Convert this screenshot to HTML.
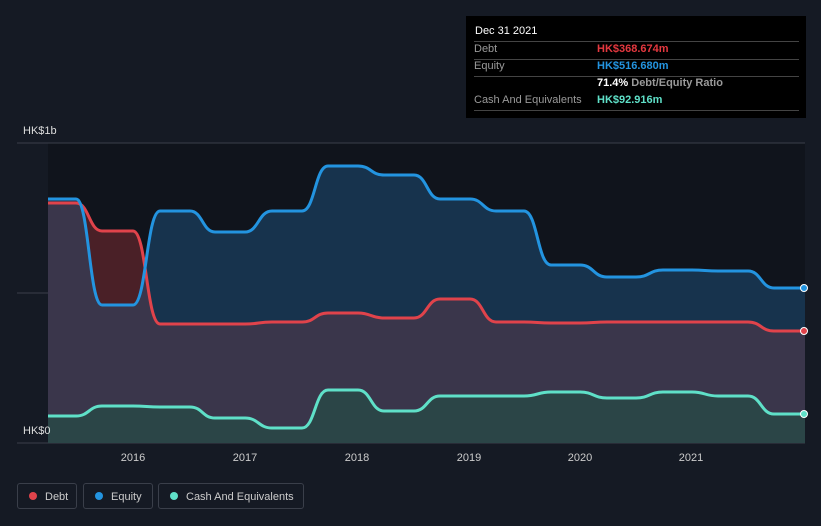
<!DOCTYPE html><html><head><style>
body{margin:0;background:#151a24;width:821px;height:526px;overflow:hidden;font-family:"Liberation Sans",sans-serif;position:relative}
.t{position:absolute;font-size:11px}
.tip{position:absolute;left:466px;top:16px;width:340px;height:102px;background:#000;}
.row{position:absolute;left:8px;width:325px;border-bottom:1px solid #444;height:17px;font-size:11px;color:#9a9a9a}
.row span{position:absolute;left:123px;font-weight:bold}
.leg{position:absolute;top:483px;height:26px;border:1px solid #3a3f4a;border-radius:3px;color:#ccc;font-size:11px;line-height:26px;box-sizing:border-box}
.leg i{display:inline-block;width:8px;height:8px;border-radius:50%;margin:0 8px 0 11px;vertical-align:-0px}
</style></head><body>
<svg width="821" height="526" style="position:absolute;left:0;top:0">
<defs>
<clipPath id="eq"><path d="M48,199 L76,199 C89,199 89,305 102,305 L133,305 C146.5,305 146.5,211 160,211 L190,211 C202.5,211 202.5,232 215,232 L245,232 C258.5,232 258.5,211 272,211 L302,211 C315,211 315,166 328,166 L358,166 C371,166 371,175 384,175 L414,175 C427,175 427,199 440,199 L470,199 C483,199 483,211 496,211 L524,211 C537.5,211 537.5,265 551,265 L580,265 C593.5,265 593.5,277 607,277 L636,277 C649.5,277 649.5,270 663,270 L692,270 C705,270 705,271 718,271 L748,271 C761,271 761,288 774,288 L805,288 L805,443 L48,443Z"/></clipPath>
</defs>
<rect x="48" y="143" width="757" height="300" fill="#10141c"/>
<line x1="17" y1="143" x2="805" y2="143" stroke="#3a3f4a"/>
<line x1="17" y1="293" x2="805" y2="293" stroke="#3a3f4a"/>
<line x1="17" y1="443" x2="805" y2="443" stroke="#3a3f4a"/>
<path fill="#4a2027" d="M48,203 L76,203 C89,203 89,231 102,231 L133,231 C146.5,231 146.5,324 160,324 L245,324 C258.5,324 258.5,322 272,322 L302,322 C315,322 315,313 328,313 L358,313 C371,313 371,318 384,318 L414,318 C427,318 427,299 440,299 L470,299 C483,299 483,322 496,322 L524,322 C537.5,322 537.5,323 551,323 L580,323 C593.5,323 593.5,322 607,322 L748,322 C761,322 761,331 774,331 L805,331 L805,443 L48,443Z"/>
<path fill="#17334d" clip-path="url(#eq)" d="M0,0H821V526H0Z"/>
<path fill="#3a364b" clip-path="url(#eq)" d="M48,203 L76,203 C89,203 89,231 102,231 L133,231 C146.5,231 146.5,324 160,324 L245,324 C258.5,324 258.5,322 272,322 L302,322 C315,322 315,313 328,313 L358,313 C371,313 371,318 384,318 L414,318 C427,318 427,299 440,299 L470,299 C483,299 483,322 496,322 L524,322 C537.5,322 537.5,323 551,323 L580,323 C593.5,323 593.5,322 607,322 L748,322 C761,322 761,331 774,331 L805,331 L805,443 L48,443Z"/>
<path fill="#2b4547" d="M48,416 L76,416 C89,416 89,406 102,406 L133,406 C146.5,406 146.5,407 160,407 L190,407 C202.5,407 202.5,418 215,418 L245,418 C258.5,418 258.5,428 272,428 L302,428 C315,428 315,390 328,390 L358,390 C371,390 371,411 384,411 L414,411 C427,411 427,396 440,396 L524,396 C537.5,396 537.5,392 551,392 L580,392 C593.5,392 593.5,398 607,398 L636,398 C649.5,398 649.5,392 663,392 L692,392 C705,392 705,396 718,396 L748,396 C761,396 761,414 774,414 L805,414 L805,443 L48,443Z"/>
<g fill="none" stroke-width="3">
<path stroke="#e0434b" d="M48,203 L76,203 C89,203 89,231 102,231 L133,231 C146.5,231 146.5,324 160,324 L245,324 C258.5,324 258.5,322 272,322 L302,322 C315,322 315,313 328,313 L358,313 C371,313 371,318 384,318 L414,318 C427,318 427,299 440,299 L470,299 C483,299 483,322 496,322 L524,322 C537.5,322 537.5,323 551,323 L580,323 C593.5,323 593.5,322 607,322 L748,322 C761,322 761,331 774,331 L805,331"/>
<path stroke="#2394e0" d="M48,199 L76,199 C89,199 89,305 102,305 L133,305 C146.5,305 146.5,211 160,211 L190,211 C202.5,211 202.5,232 215,232 L245,232 C258.5,232 258.5,211 272,211 L302,211 C315,211 315,166 328,166 L358,166 C371,166 371,175 384,175 L414,175 C427,175 427,199 440,199 L470,199 C483,199 483,211 496,211 L524,211 C537.5,211 537.5,265 551,265 L580,265 C593.5,265 593.5,277 607,277 L636,277 C649.5,277 649.5,270 663,270 L692,270 C705,270 705,271 718,271 L748,271 C761,271 761,288 774,288 L805,288"/>
<path stroke="#5fe0c8" d="M48,416 L76,416 C89,416 89,406 102,406 L133,406 C146.5,406 146.5,407 160,407 L190,407 C202.5,407 202.5,418 215,418 L245,418 C258.5,418 258.5,428 272,428 L302,428 C315,428 315,390 328,390 L358,390 C371,390 371,411 384,411 L414,411 C427,411 427,396 440,396 L524,396 C537.5,396 537.5,392 551,392 L580,392 C593.5,392 593.5,398 607,398 L636,398 C649.5,398 649.5,392 663,392 L692,392 C705,392 705,396 718,396 L748,396 C761,396 761,414 774,414 L805,414"/>
</g>
<circle cx="804" cy="288" r="3.5" fill="#2394e0" stroke="#fff"/>
<circle cx="804" cy="331" r="3.5" fill="#e0434b" stroke="#fff"/>
<circle cx="804" cy="414" r="3.5" fill="#5fe0c8" stroke="#fff"/>
<g fill="#ccc" font-size="11" font-family="Liberation Sans" text-anchor="middle">
<text x="133" y="461">2016</text><text x="245" y="461">2017</text><text x="357" y="461">2018</text><text x="469" y="461">2019</text><text x="580" y="461">2020</text><text x="691" y="461">2021</text>
</g>
</svg>
<div class="t" style="left:23px;top:125px;color:#ddd">HK$1b</div>
<div class="t" style="left:23px;top:425px;color:#ddd">HK$0</div>
<div class="tip">
<div style="position:absolute;left:9px;top:9px;color:#fff;font-size:11px">Dec 31 2021</div>
<div class="row" style="top:25px;border-top:1px solid #444;line-height:15px">Debt<span style="color:#e5383f">HK$368.674m</span></div>
<div class="row" style="top:43px;line-height:15px">Equity<span style="color:#2394e0">HK$516.680m</span></div>
<div class="row" style="top:60px;line-height:15px;border:none"><span style="color:#fff">71.4% <b style="color:#9a9a9a">Debt/Equity Ratio</b></span></div>
<div class="row" style="top:77px;line-height:15px;border-bottom:1px solid #444">Cash And Equivalents<span style="color:#5fe0c8">HK$92.916m</span></div>
</div>
<div class="leg" style="left:17px;width:60px"><i style="background:#e0434b"></i>Debt</div>
<div class="leg" style="left:83px;width:70px"><i style="background:#2394e0"></i>Equity</div>
<div class="leg" style="left:158px;width:146px"><i style="background:#5fe0c8"></i>Cash And Equivalents</div>
</body></html>
